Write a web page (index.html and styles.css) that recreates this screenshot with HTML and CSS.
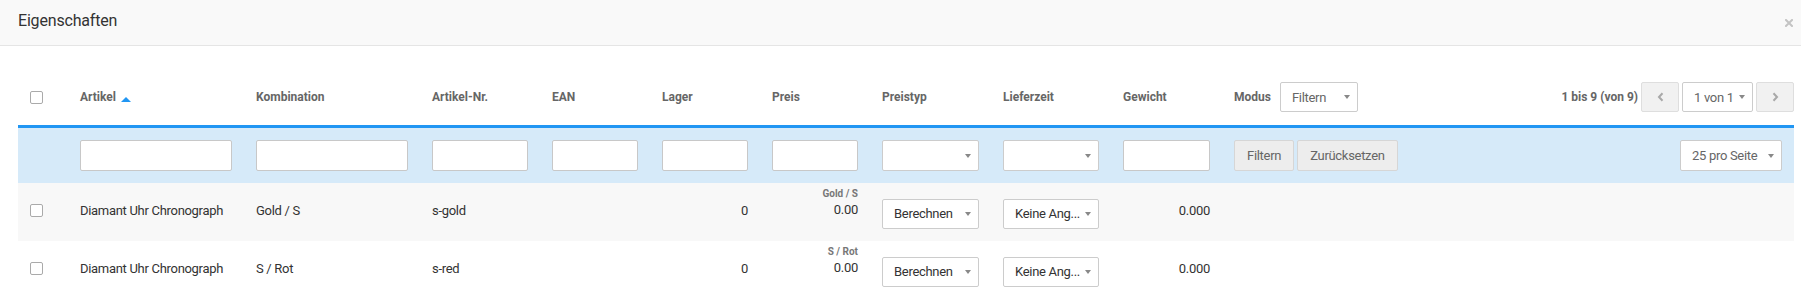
FILE: index.html
```html
<!DOCTYPE html>
<html lang="de">
<head>
<meta charset="utf-8">
<title>Eigenschaften</title>
<link rel="stylesheet" href="styles.css">
</head>
<body>
<div class="modal">
  <div class="modal-header">
    <h4 class="modal-title">Eigenschaften</h4>
    <span class="close"><svg width="8" height="8" viewBox="0 0 8 8"><path d="M1 1L7 7M7 1L1 7" stroke="#c4c4c4" stroke-width="2" stroke-linecap="square"/></svg></span>
  </div>
  <div class="grid">
    <div class="row head">
      <div class="cell"><input type="checkbox" class="cb"></div>
      <div class="cell">Artikel<span class="sort"></span></div>
      <div class="cell">Kombination</div>
      <div class="cell">Artikel-Nr.</div>
      <div class="cell">EAN</div>
      <div class="cell">Lager</div>
      <div class="cell">Preis</div>
      <div class="cell">Preistyp</div>
      <div class="cell">Lieferzeit</div>
      <div class="cell">Gewicht</div>
      <div class="cell last">
        <div class="modus">
          <span>Modus</span>
          <div class="select sel-modus muted"><span>Filtern</span><i class="caret"></i></div>
        </div>
        <div class="pager">
          <span class="pager-info">1 bis 9 (von 9)</span>
          <span class="btn-nav"><svg width="7" height="10" viewBox="0 0 7 10"><path d="M5.5 1.2L2 5L5.5 8.8" fill="none" stroke="#a8a8a8" stroke-width="2"/></svg></span>
          <div class="select sel-page muted"><span>1 von 1</span><i class="caret"></i></div>
          <span class="btn-nav"><svg width="7" height="10" viewBox="0 0 7 10"><path d="M1.5 1.2L5 5L1.5 8.8" fill="none" stroke="#a8a8a8" stroke-width="2"/></svg></span>
        </div>
      </div>
    </div>
    <div class="row filters">
      <div class="cell"></div>
      <div class="cell"><input type="text" class="inp"></div>
      <div class="cell"><input type="text" class="inp"></div>
      <div class="cell"><input type="text" class="inp"></div>
      <div class="cell"><input type="text" class="inp"></div>
      <div class="cell"><input type="text" class="inp"></div>
      <div class="cell"><input type="text" class="inp"></div>
      <div class="cell"><div class="select full"><span></span><i class="caret"></i></div></div>
      <div class="cell"><div class="select full"><span></span><i class="caret"></i></div></div>
      <div class="cell"><input type="text" class="inp"></div>
      <div class="cell spread">
        <div class="btns">
          <span class="btn">Filtern</span>
          <span class="btn">Zurücksetzen</span>
        </div>
        <div class="select sel-per muted"><span>25 pro Seite</span><i class="caret"></i></div>
      </div>
    </div>
    <div class="row data odd">
      <div class="cell"><input type="checkbox" class="cb"></div>
      <div class="cell">Diamant Uhr Chronograph</div>
      <div class="cell">Gold / S</div>
      <div class="cell">s-gold</div>
      <div class="cell"></div>
      <div class="cell num">0</div>
      <div class="cell price"><span class="var">Gold / S</span><span class="val">0.00</span></div>
      <div class="cell"><div class="select full"><span>Berechnen</span><i class="caret"></i></div></div>
      <div class="cell"><div class="select full"><span>Keine Ang...</span><i class="caret"></i></div></div>
      <div class="cell num">0.000</div>
      <div class="cell"></div>
    </div>
    <div class="row data">
      <div class="cell"><input type="checkbox" class="cb"></div>
      <div class="cell">Diamant Uhr Chronograph</div>
      <div class="cell">S / Rot</div>
      <div class="cell">s-red</div>
      <div class="cell"></div>
      <div class="cell num">0</div>
      <div class="cell price"><span class="var">S / Rot</span><span class="val">0.00</span></div>
      <div class="cell"><div class="select full"><span>Berechnen</span><i class="caret"></i></div></div>
      <div class="cell"><div class="select full"><span>Keine Ang...</span><i class="caret"></i></div></div>
      <div class="cell num">0.000</div>
      <div class="cell"></div>
    </div>
  </div>
</div>
</body>
</html>
```
FILE: styles.css
```css
* { box-sizing: border-box; }
html, body { margin: 0; padding: 0; }
body {
  font-family: Roboto, "Liberation Sans", sans-serif;
  color: #333;
  background: #fff;
  overflow: hidden;
}
.modal-header {
  height: 46px;
  background: #f9f9f9;
  border-bottom: 1px solid #e5e5e5;
  display: flex;
  align-items: center;
  justify-content: space-between;
  padding: 0 8px 3px 18px;
}
.modal-title {
  margin: 0;
  font-size: 16px;
  font-weight: 400;
  line-height: 20px;
  letter-spacing: -0.18px;
  color: #333;
}
.close { display: flex; margin-top: 3px; }

.grid { margin: 23px 7px 0 18px; }
.row {
  display: grid;
  grid-template-columns: 50px 176px 176px 120px 110px 110px 110px 121px 120px 111px 1fr;
}
.cell {
  padding: 0 12px;
  display: flex;
  align-items: center;
  min-width: 0;
  white-space: nowrap;
}
.head {
  height: 59px;
  border-bottom: 3px solid #2196f3;
  font-size: 12px;
  font-weight: 700;
  color: #666;
}
.sort {
  display: inline-block;
  width: 0;
  height: 0;
  margin-left: 5px;
  margin-top: 4px;
  border-left: 5px solid transparent;
  border-right: 5px solid transparent;
  border-bottom: 5px solid #2196f3;
}
.cb {
  appearance: none;
  -webkit-appearance: none;
  width: 13px;
  height: 13px;
  margin: 0;
  border: 1px solid #aaa;
  border-radius: 2px;
  background: #fff;
}
.head .last { padding-right: 0; justify-content: space-between; }
.modus { display: flex; align-items: center; gap: 9px; }
.pager { display: flex; align-items: center; gap: 3px; }
.btn-nav {
  width: 38px;
  height: 30px;
  border: 1px solid #dedede;
  border-radius: 2px;
  background: #f1f1f1;
  display: flex;
  align-items: center;
  justify-content: center;
}
.select {
  height: 30px;
  border: 1px solid #ccc;
  border-radius: 2px;
  background: #fff;
  display: flex;
  align-items: center;
  justify-content: space-between;
  padding: 0 7px 0 11px;
  font-size: 13px;
  font-weight: 400;
  letter-spacing: -0.3px;
  color: #333;
}
.select.muted { color: #666; }
.sel-modus { width: 78px; }
.sel-page { width: 71px; }
.sel-per { width: 102px; height: 31px; }
.select.full { width: 100%; }
.caret {
  display: block;
  width: 0;
  height: 0;
  border-left: 3.5px solid transparent;
  border-right: 3.5px solid transparent;
  border-top: 4px solid #888;
}
.filters {
  height: 55px;
  background: #d6eaf9;
}
.filters .select { height: 31px; }
.inp {
  width: 100%;
  height: 31px;
  margin: 0;
  border: 1px solid #c8c8c8;
  border-radius: 2px;
  background: #fff;
  font: inherit;
}
.spread { justify-content: space-between; }
.btns { display: flex; gap: 3px; }
.btn {
  height: 31px;
  padding: 0 12px;
  border: 1px solid #d6d6d6;
  border-radius: 2px;
  background: #ededed;
  display: flex;
  align-items: center;
  font-size: 13px;
  letter-spacing: -0.3px;
  color: #666;
}
.data {
  height: 58px;
  font-size: 13px;
  letter-spacing: -0.3px;
  color: #333;
}
.data .cell { padding-bottom: 3px; }
.data.odd { background: #f8f8f8; }
.num { justify-content: flex-end; }
.price {
  flex-direction: column;
  align-items: flex-end;
  justify-content: flex-start;
  padding-top: 4px;
}
.var { font-size: 10px; font-weight: 700; color: #777; line-height: 14px; letter-spacing: 0; }
.val { line-height: 18px; }
.data .select { margin-top: 6px; }
```
